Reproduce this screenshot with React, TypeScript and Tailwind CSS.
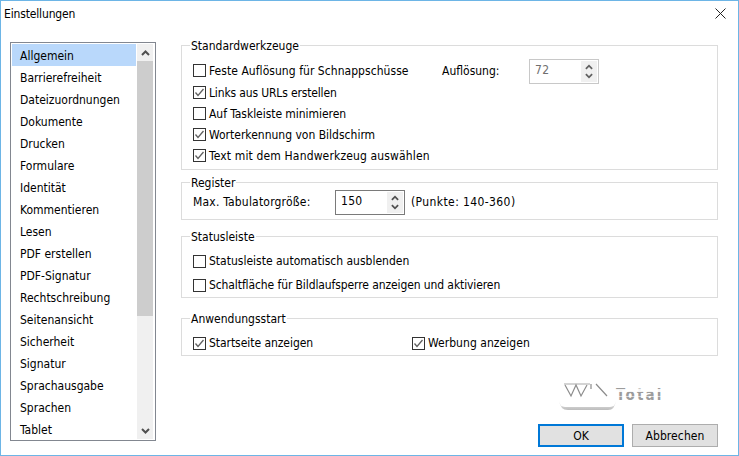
import React from 'react';

const categories = [
  'Allgemein', 'Barrierefreiheit', 'Dateizuordnungen', 'Dokumente', 'Drucken', 'Formulare',
  'Identität', 'Kommentieren', 'Lesen', 'PDF erstellen', 'PDF-Signatur', 'Rechtschreibung',
  'Seitenansicht', 'Sicherheit', 'Signatur', 'Sprachausgabe', 'Sprachen', 'Tablet',
];

function Chevron({ down = false, color = '#505050', width = 9 }: { down?: boolean; color?: string; width?: number }) {
  return (
    <svg width={width} height="6" viewBox="0 0 9 6" className={down ? 'rotate-180' : ''}>
      <path d="M1 5L4.5 1.5L8 5" fill="none" stroke={color} strokeWidth="2" />
    </svg>
  );
}

function Check({ label, checked = false, className = '' }: { label: string; checked?: boolean; className?: string }) {
  return (
    <div className="flex items-center gap-[3px]">
      <div className="w-[13px] h-[13px] border border-[#333333] bg-white flex items-center justify-center shrink-0">
        {checked && (
          <svg width="11" height="11" viewBox="0 0 11 11">
            <path d="M1.5 5.5L4 8.5L9.5 2" fill="none" stroke="#606060" strokeWidth="1.3" />
          </svg>
        )}
      </div>
      <span className={className}>{label}</span>
    </div>
  );
}

function Spin({ value, disabled = false }: { value: string; disabled?: boolean }) {
  return (
    <div
      className={`w-[70px] h-[25px] flex border bg-white ${
        disabled ? 'border-[#c8c8c8] text-[#6f6f6f]' : 'border-[#7a7a7a]'
      }`}
    >
      <span className="flex-1 pl-[5px] leading-[20px] tracking-[0.3px]">{value}</span>
      <div className="w-[16px] mr-[1px] my-[1px] flex flex-col items-center justify-around bg-[#f0f0f0] py-[2px]">
        <Chevron width={8} color={disabled ? '#606060' : '#505050'} />
        <Chevron width={8} down color={disabled ? '#606060' : '#505050'} />
      </div>
    </div>
  );
}

function Group({ title, className, children }: { title: string; className: string; children: React.ReactNode }) {
  return (
    <div className={`border border-[#dcdcdc] w-[537px] ${className}`}>
      <div className="-mt-[9px] ml-[8px] w-fit h-[18px] leading-[18px] bg-white px-[1px]">{title}</div>
      {children}
    </div>
  );
}

export default function App() {
  return (
    <div className="w-[739px] h-[456px] border border-[#6db5e6] bg-white text-[12px] text-black font-['DejaVu_Sans_Condensed','DejaVu_Sans',sans-serif] overflow-hidden">
      {/* title bar */}
      <div className="h-[41px] flex items-start justify-between pl-[3px] pr-[12px] pt-[4px]">
        <span className="leading-[19px] tracking-[-0.15px]">Einstellungen</span>
        <svg width="11" height="11" viewBox="0 0 11 11" className="mt-[3px]">
          <path d="M0.5 0.5L10.5 10.5M10.5 0.5L0.5 10.5" stroke="#222222" strokeWidth="1" />
        </svg>
      </div>

      <div className="flex items-start pl-[9px]">
        {/* category list */}
        <div className="w-[146px] h-[399px] border border-[#828790] p-[1px] flex">
          <div className="w-[124px] overflow-hidden">
            {categories.map((c, i) => (
              <div
                key={c}
                className={`h-[22px] leading-[24px] pl-[8px] ${i === 0 ? 'bg-[#b9d8fb]' : ''}`}
              >
                {c}
              </div>
            ))}
          </div>
          <div className="ml-[1px] w-[16px] flex flex-col bg-[#f0f0f0]">
            <div className="h-[17px] flex items-center justify-center">
              <Chevron />
            </div>
            <div className="h-[255px] bg-[#cdcdcd]" />
            <div className="flex-1" />
            <div className="h-[17px] flex items-center justify-center">
              <Chevron down />
            </div>
          </div>
        </div>

        {/* settings */}
        <div className="ml-[25px] mt-[3px]">
          <Group title="Standardwerkzeuge" className="h-[125px]">
            <div className="pl-[11px] pt-[4px]">
              <div className="h-[23px] flex items-center">
                <div className="w-[249px]">
                  <Check label="Feste Auflösung für Schnappschüsse" className="tracking-[0.05px]" />
                </div>
                <span className="w-[87px]">Auflösung:</span>
                <div className="mt-[2px]">
                  <Spin value="72" disabled />
                </div>
              </div>
              <div className="h-[21px] flex items-center"><Check checked label="Links aus URLs erstellen" className="tracking-[-0.15px]" /></div>
              <div className="h-[21px] flex items-center"><Check label="Auf Taskleiste minimieren" className="tracking-[-0.05px]" /></div>
              <div className="h-[21px] flex items-center"><Check checked label="Worterkennung von Bildschirm" /></div>
              <div className="h-[21px] flex items-center"><Check checked label="Text mit dem Handwerkzeug auswählen" className="tracking-[0.15px]" /></div>
            </div>
          </Group>

          <Group title="Register" className="h-[38px] mt-[12px]">
            <div className="flex items-center pl-[11px] h-[25px] -mt-[2px]">
              <span className="w-[142px] mb-[2px] tracking-[0.2px]">Max. Tabulatorgröße:</span>
              <Spin value="150" />
              <span className="ml-[6px] mb-[2px] tracking-[0.4px]">(Punkte: 140-360)</span>
            </div>
          </Group>

          <Group title="Statusleiste" className="h-[62px] mt-[16px]">
            <div className="pl-[11px] pt-[3px]">
              <div className="h-[24px] flex items-center"><Check label="Statusleiste automatisch ausblenden" /></div>
              <div className="h-[24px] flex items-center"><Check label="Schaltfläche für Bildlaufsperre anzeigen und aktivieren" className="tracking-[-0.1px]" /></div>
            </div>
          </Group>

          <Group title="Anwendungsstart" className="h-[38px] mt-[20px]">
            <div className="flex items-center pl-[11px] h-[24px] mt-[3px]">
              <div className="w-[219px]"><Check checked label="Startseite anzeigen" className="tracking-[-0.05px]" /></div>
              <Check checked label="Werbung anzeigen" className="tracking-[0.05px]" />
            </div>
          </Group>

          {/* watermark */}
          <div className="h-[68px] flex justify-end items-start pr-[42px] pt-[12px]">
            <svg width="124" height="48" viewBox="0 0 124 48">
              <defs>
                <linearGradient id="wm" x1="0" y1="0" x2="0" y2="1">
                  <stop offset="0" stopColor="#f4f4f4" />
                  <stop offset="1" stopColor="#bcbcbc" />
                </linearGradient>
              </defs>
              <path d="M7 32Q8 42 16 42H56Q63 42 64 32Z" fill="url(#wm)" />
              <rect x="7" y="24" width="57" height="15" rx="6" fill="#ffffff" />
              <rect x="12" y="15" width="26" height="2" fill="#d4d4d4" />
              <path d="M13 17L19 28L24 17L29 28L35 17" fill="none" stroke="#8c8c8c" strokeWidth="1.2" />
              <path d="M39 16V21M44 16L55 28" fill="none" stroke="#8c8c8c" strokeWidth="1.2" />
              <text x="64" y="32" fontSize="15" fontWeight="700" fill="#9c9c9c" letterSpacing="2.2">Total</text>
              <rect x="62" y="21" width="56" height="3" fill="#ffffff" opacity="0.9" />
              <rect x="62" y="28" width="56" height="1" fill="#ffffff" opacity="0.6" />
            </svg>
          </div>

          {/* buttons */}
          <div className="flex gap-[8px] pl-[357px]">
            <div className="w-[86px] h-[23px] border-2 border-[#0078d7] bg-[#e1e1e1] flex items-center justify-center">OK</div>
            <div className="w-[86px] h-[23px] border border-[#adadad] bg-[#e1e1e1] flex items-center justify-center tracking-[0.1px]">Abbrechen</div>
          </div>
        </div>
      </div>
    </div>
  );
}
